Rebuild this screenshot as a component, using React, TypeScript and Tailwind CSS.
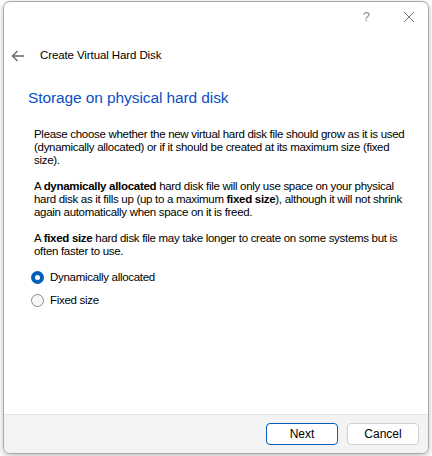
import React from "react";

const font = { fontFamily: '"Segoe UI", "Liberation Sans", Arial, sans-serif' };

export default function App() {
  return (
    <div className="h-[456px] w-[432px] overflow-hidden bg-white" style={font}>
      <div className="ml-[3px] mt-[1px] flex h-[453px] w-[426px] flex-col overflow-hidden rounded-[7px] border border-[#a9a9a9] bg-white shadow-[0_2px_6px_rgba(0,0,0,0.25)]">
        {/* title bar */}
        <div className="flex h-[28px] items-center justify-end pr-[13px] text-[#8a8a8a]">
          <span className="mr-[33px] text-[13px] leading-none">?</span>
          <svg width="12" height="12" viewBox="0 0 12 12" className="mt-[1px]">
            <path d="M1 1 L11 11 M11 1 L1 11" stroke="#777" strokeWidth="1" />
          </svg>
        </div>

        {/* header */}
        <div className="mt-[13px] flex h-[26px] items-center">
          <svg width="14" height="12" viewBox="0 0 14 12" className="ml-[7px]">
            <path d="M13 6 H1.5 M6.5 1 L1.5 6 L6.5 11" stroke="#666" strokeWidth="1.3" fill="none" />
          </svg>
          <span className="ml-[15px] text-[11.5px] tracking-[-0.1px] text-black">Create Virtual Hard Disk</span>
        </div>

        <div className="mt-[19px] pl-[24px] text-[15.5px] leading-[20px] tracking-[-0.1px] text-[#0a4fc4]">
          Storage on physical hard disk
        </div>

        {/* body */}
        <div className="mt-[20px] whitespace-nowrap pl-[30px] pr-[10px] text-[11.5px] leading-[13px] tracking-[-0.3px] text-black">
          <p>
            Please choose whether the new virtual hard disk file should grow as it is used
            <br />
            (dynamically allocated) or if it should be created at its maximum size (fixed
            <br />
            size).
          </p>
          <p className="mt-[13px]">
            A <b>dynamically allocated</b> hard disk file will only use space on your physical
            <br />
            hard disk as it fills up (up to a maximum <b>fixed size</b>), although it will not shrink
            <br />
            again automatically when space on it is freed.
          </p>
          <p className="mt-[13px]">
            A <b>fixed size</b> hard disk file may take longer to create on some systems but is
            <br />
            often faster to use.
          </p>

          <div className="mt-[13px] flex flex-col gap-[10px]">
            <label className="flex items-center">
              <span className="-ml-[3px] flex h-[13px] w-[13px] items-center justify-center rounded-full bg-[#005fb8]">
                <span className="h-[5px] w-[5px] rounded-full bg-white" />
              </span>
              <span className="ml-[6px]">Dynamically allocated</span>
            </label>
            <label className="flex items-center">
              <span className="-ml-[3px] h-[13px] w-[13px] rounded-full border border-[#8a8a8a] bg-[#f7f7f7]" />
              <span className="ml-[6px]">Fixed size</span>
            </label>
          </div>
        </div>

        <div className="flex-1" />

        {/* footer */}
        <div className="flex h-[39px] items-center justify-end gap-[9px] border-t border-[#e5e5e5] bg-[#f3f3f3] pr-[9px]">
          <button className="h-[22px] w-[72px] rounded-[4px] border border-[#005fb8] bg-white text-[12px] text-black">
            Next
          </button>
          <button className="h-[22px] w-[72px] rounded-[4px] border border-[#d0d0d0] bg-white text-[12px] text-black">
            Cancel
          </button>
        </div>
      </div>
    </div>
  );
}
